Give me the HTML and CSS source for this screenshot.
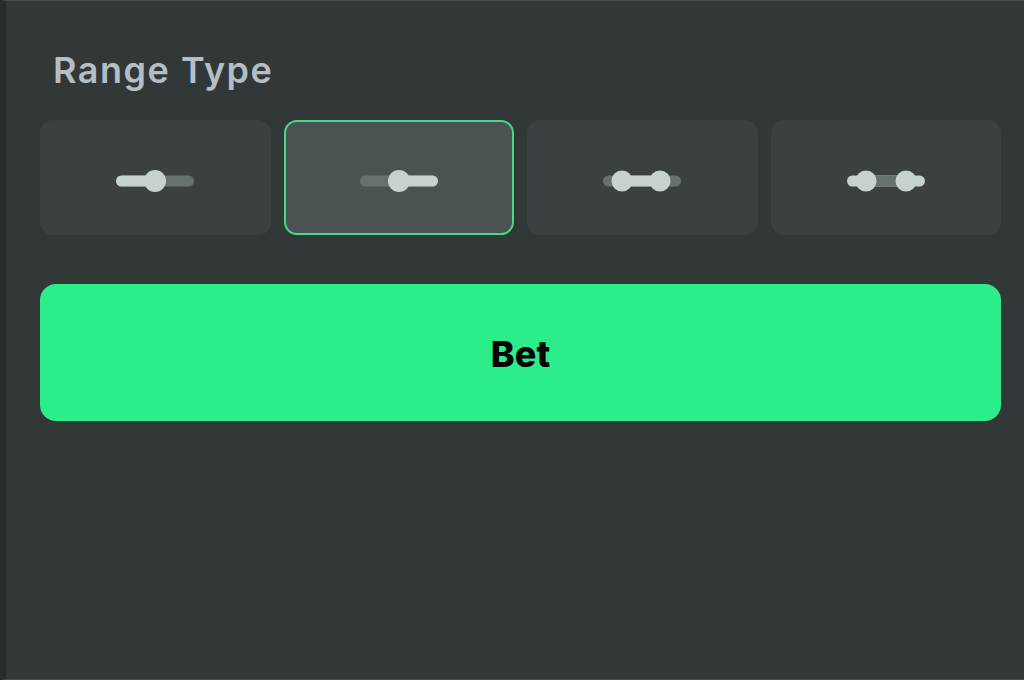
FILE: index.html
```html
<!DOCTYPE html>
<html lang="en">
<head>
<meta charset="utf-8">
<title>Range Type</title>
<link rel="stylesheet" href="styles.css">
</head>
<body>
<main class="panel">
  <h2 class="title">Range Type</h2>
  <div class="tiles">
    <button class="tile" aria-label="Below">
      <svg class="icon" width="80" height="24" viewBox="0 0 80 24">
        <rect x="1" y="6.5" width="78" height="11" rx="5.5" class="dim"/>
        <rect x="1" y="6.5" width="40" height="11" rx="5.5" class="lit"/>
        <circle cx="40" cy="12" r="11" class="lit"/>
      </svg>
    </button>
    <button class="tile active" aria-label="Above">
      <svg class="icon" width="80" height="24" viewBox="0 0 80 24">
        <rect x="1" y="6.5" width="78" height="11" rx="5.5" class="dim"/>
        <rect x="39" y="6.5" width="40" height="11" rx="5.5" class="lit"/>
        <circle cx="40" cy="12" r="11" class="lit"/>
      </svg>
    </button>
    <button class="tile" aria-label="Between">
      <svg class="icon" width="80" height="24" viewBox="0 0 80 24">
        <rect x="1" y="6.5" width="78" height="11" rx="5.5" class="dim"/>
        <rect x="20" y="6.5" width="38" height="11" class="lit"/>
        <circle cx="20" cy="12" r="10.5" class="lit"/>
        <circle cx="58" cy="12" r="10.5" class="lit"/>
      </svg>
    </button>
    <button class="tile" aria-label="Outside">
      <svg class="icon" width="80" height="24" viewBox="0 0 80 24">
        <rect x="1" y="6.5" width="78" height="11" rx="5.5" class="lit"/>
        <rect x="20" y="6.5" width="40" height="11" class="dim"/>
        <circle cx="20" cy="12" r="10.5" class="lit"/>
        <circle cx="60" cy="12" r="10.5" class="lit"/>
      </svg>
    </button>
  </div>
  <button class="bet">Bet</button>
</main>
</body>
</html>
```

FILE: styles.css
```css
* { box-sizing: border-box; }

html, body {
  margin: 0;
  height: 100%;
}

body {
  background: #323738;
  border-left: 6px solid #272b2c;
  border-top: 1px solid #474c4e;
  border-bottom: 1px solid #474c4e;
  font-family: Inter, "Noto Sans", sans-serif;
}

.panel {
  display: flex;
  flex-direction: column;
  padding: 47px 23px 0 34px;
}

.title {
  margin: 0 0 0 13px;
  font-size: 36px;
  line-height: 44px;
  font-weight: 600;
  color: #b4bec4;
  letter-spacing: 1.5px;
}

.tiles {
  display: grid;
  grid-template-columns: repeat(4, 1fr);
  gap: 13px;
  margin-top: 28px;
}

.tile {
  height: 115px;
  display: flex;
  align-items: center;
  justify-content: center;
  background: #3b4140;
  border: 2px solid transparent;
  border-radius: 13px;
  padding: 7px 0 0 0;
  cursor: pointer;
}

.tile.active {
  background: #4a5253;
  border-color: #45d98a;
}

.icon { display: block; }
.icon .lit { fill: #c6d1d2; }
.icon .dim { fill: #687171; }

.bet {
  margin-top: 49px;
  height: 137px;
  border: none;
  border-radius: 16px;
  background: #2bee8a;
  color: #000;
  font-family: Inter, "Noto Sans", sans-serif;
  font-size: 36px;
  font-weight: 800;
  padding: 2px 0 0 0;
  cursor: pointer;
}
```
